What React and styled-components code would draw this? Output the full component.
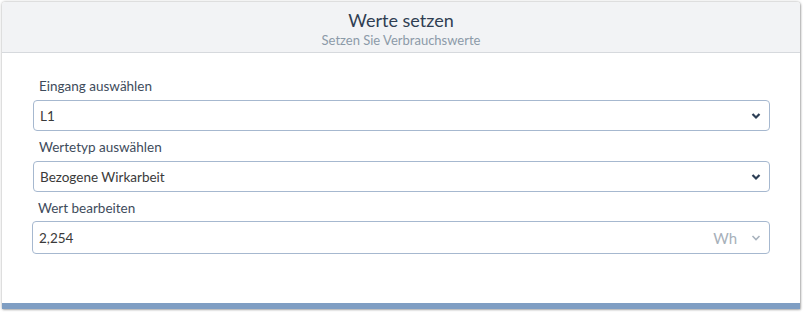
import React from 'react';
import styled, { createGlobalStyle } from 'styled-components';

const GlobalStyle = createGlobalStyle`
  body {
    margin: 0;
    background: #ffffff;
    font-family: 'Lato', 'Liberation Sans', sans-serif;
  }
`

const Page = styled.div`
  padding: 2px 5px 4px 2px;
`

const Card = styled.div`
  width: 798px;
  background: #ffffff;
  border-radius: 3px 3px 0 0;
  box-shadow: 0 0 3px rgba(0, 0, 0, 0.35), 1px 1px 2px rgba(0, 0, 0, 0.2);
  overflow: hidden;
`

const Header = styled.div`
  height: 51px;
  background: #f2f3f5;
  border-bottom: 1px solid #d6d9dd;
  display: flex;
  flex-direction: column;
  align-items: center;
  padding-top: 7px;
  box-sizing: border-box;
`

const Title = styled.div`
  font-size: 18px;
  color: #2f3e52;
  line-height: 22px;
`

const Subtitle = styled.div`
  font-size: 13px;
  color: #8c9aa8;
  line-height: 18px;
`

const Body = styled.div`
  height: 250px;
  padding: 24px 30px 0 31px;
  box-sizing: border-box;
  display: flex;
  flex-direction: column;
`

const Field = styled.div`
  display: flex;
  flex-direction: column;
  margin-bottom: 7px;
`

const Label = styled.label`
  font-size: 13.5px;
  color: #3e4b5b;
  line-height: 18px;
  padding-left: ${p => p.$indent || 6}px;
  margin-bottom: ${p => p.$gap || 5}px;
`

const Box = styled.div`
  height: ${p => p.$tall ? 33 : 31}px;
  margin-left: ${p => p.$shift || 0}px;
  border: 1px solid #a6b8cf;
  border-radius: 4px;
  display: flex;
  align-items: center;
  padding: 0 8px 0 6px;
  box-sizing: border-box;
  font-size: 13.5px;
  color: #3a3a3a;
`

const Value = styled.span`
  flex: 1;
`

const Unit = styled.span`
  font-size: 15px;
  color: #a7b0ba;
  margin-right: 14px;
`

const Footer = styled.div`
  height: 6px;
  background: #7f9ec3;
`

const Chevron = ({ light }) => (
  <svg width="10" height="8" viewBox="0 0 10 8">
    <path d="M1.5 2 L5 5.5 L8.5 2" fill="none" stroke={light ? '#a9b3be' : '#2c3e55'} strokeWidth={light ? 1.6 : 2.2} />
  </svg>
)

const App = () => {
  return (
    <>
      <GlobalStyle />
      <Page>
        <Card>
          <Header>
            <Title>Werte setzen</Title>
            <Subtitle>Setzen Sie Verbrauchswerte</Subtitle>
          </Header>
          <Body>
            <Field>
              <Label>Eingang auswählen</Label>
              <Box>
                <Value>L1</Value>
                <Chevron />
              </Box>
            </Field>
            <Field>
              <Label>Wertetyp auswählen</Label>
              <Box>
                <Value>Bezogene Wirkarbeit</Value>
                <Chevron />
              </Box>
            </Field>
            <Field>
              <Label $indent={5} $gap={4}>Wert bearbeiten</Label>
              <Box $tall $shift={-1}>
                <Value>2,254</Value>
                <Unit>Wh</Unit>
                <Chevron light />
              </Box>
            </Field>
          </Body>
          <Footer />
        </Card>
      </Page>
    </>
  )
}

export default App
